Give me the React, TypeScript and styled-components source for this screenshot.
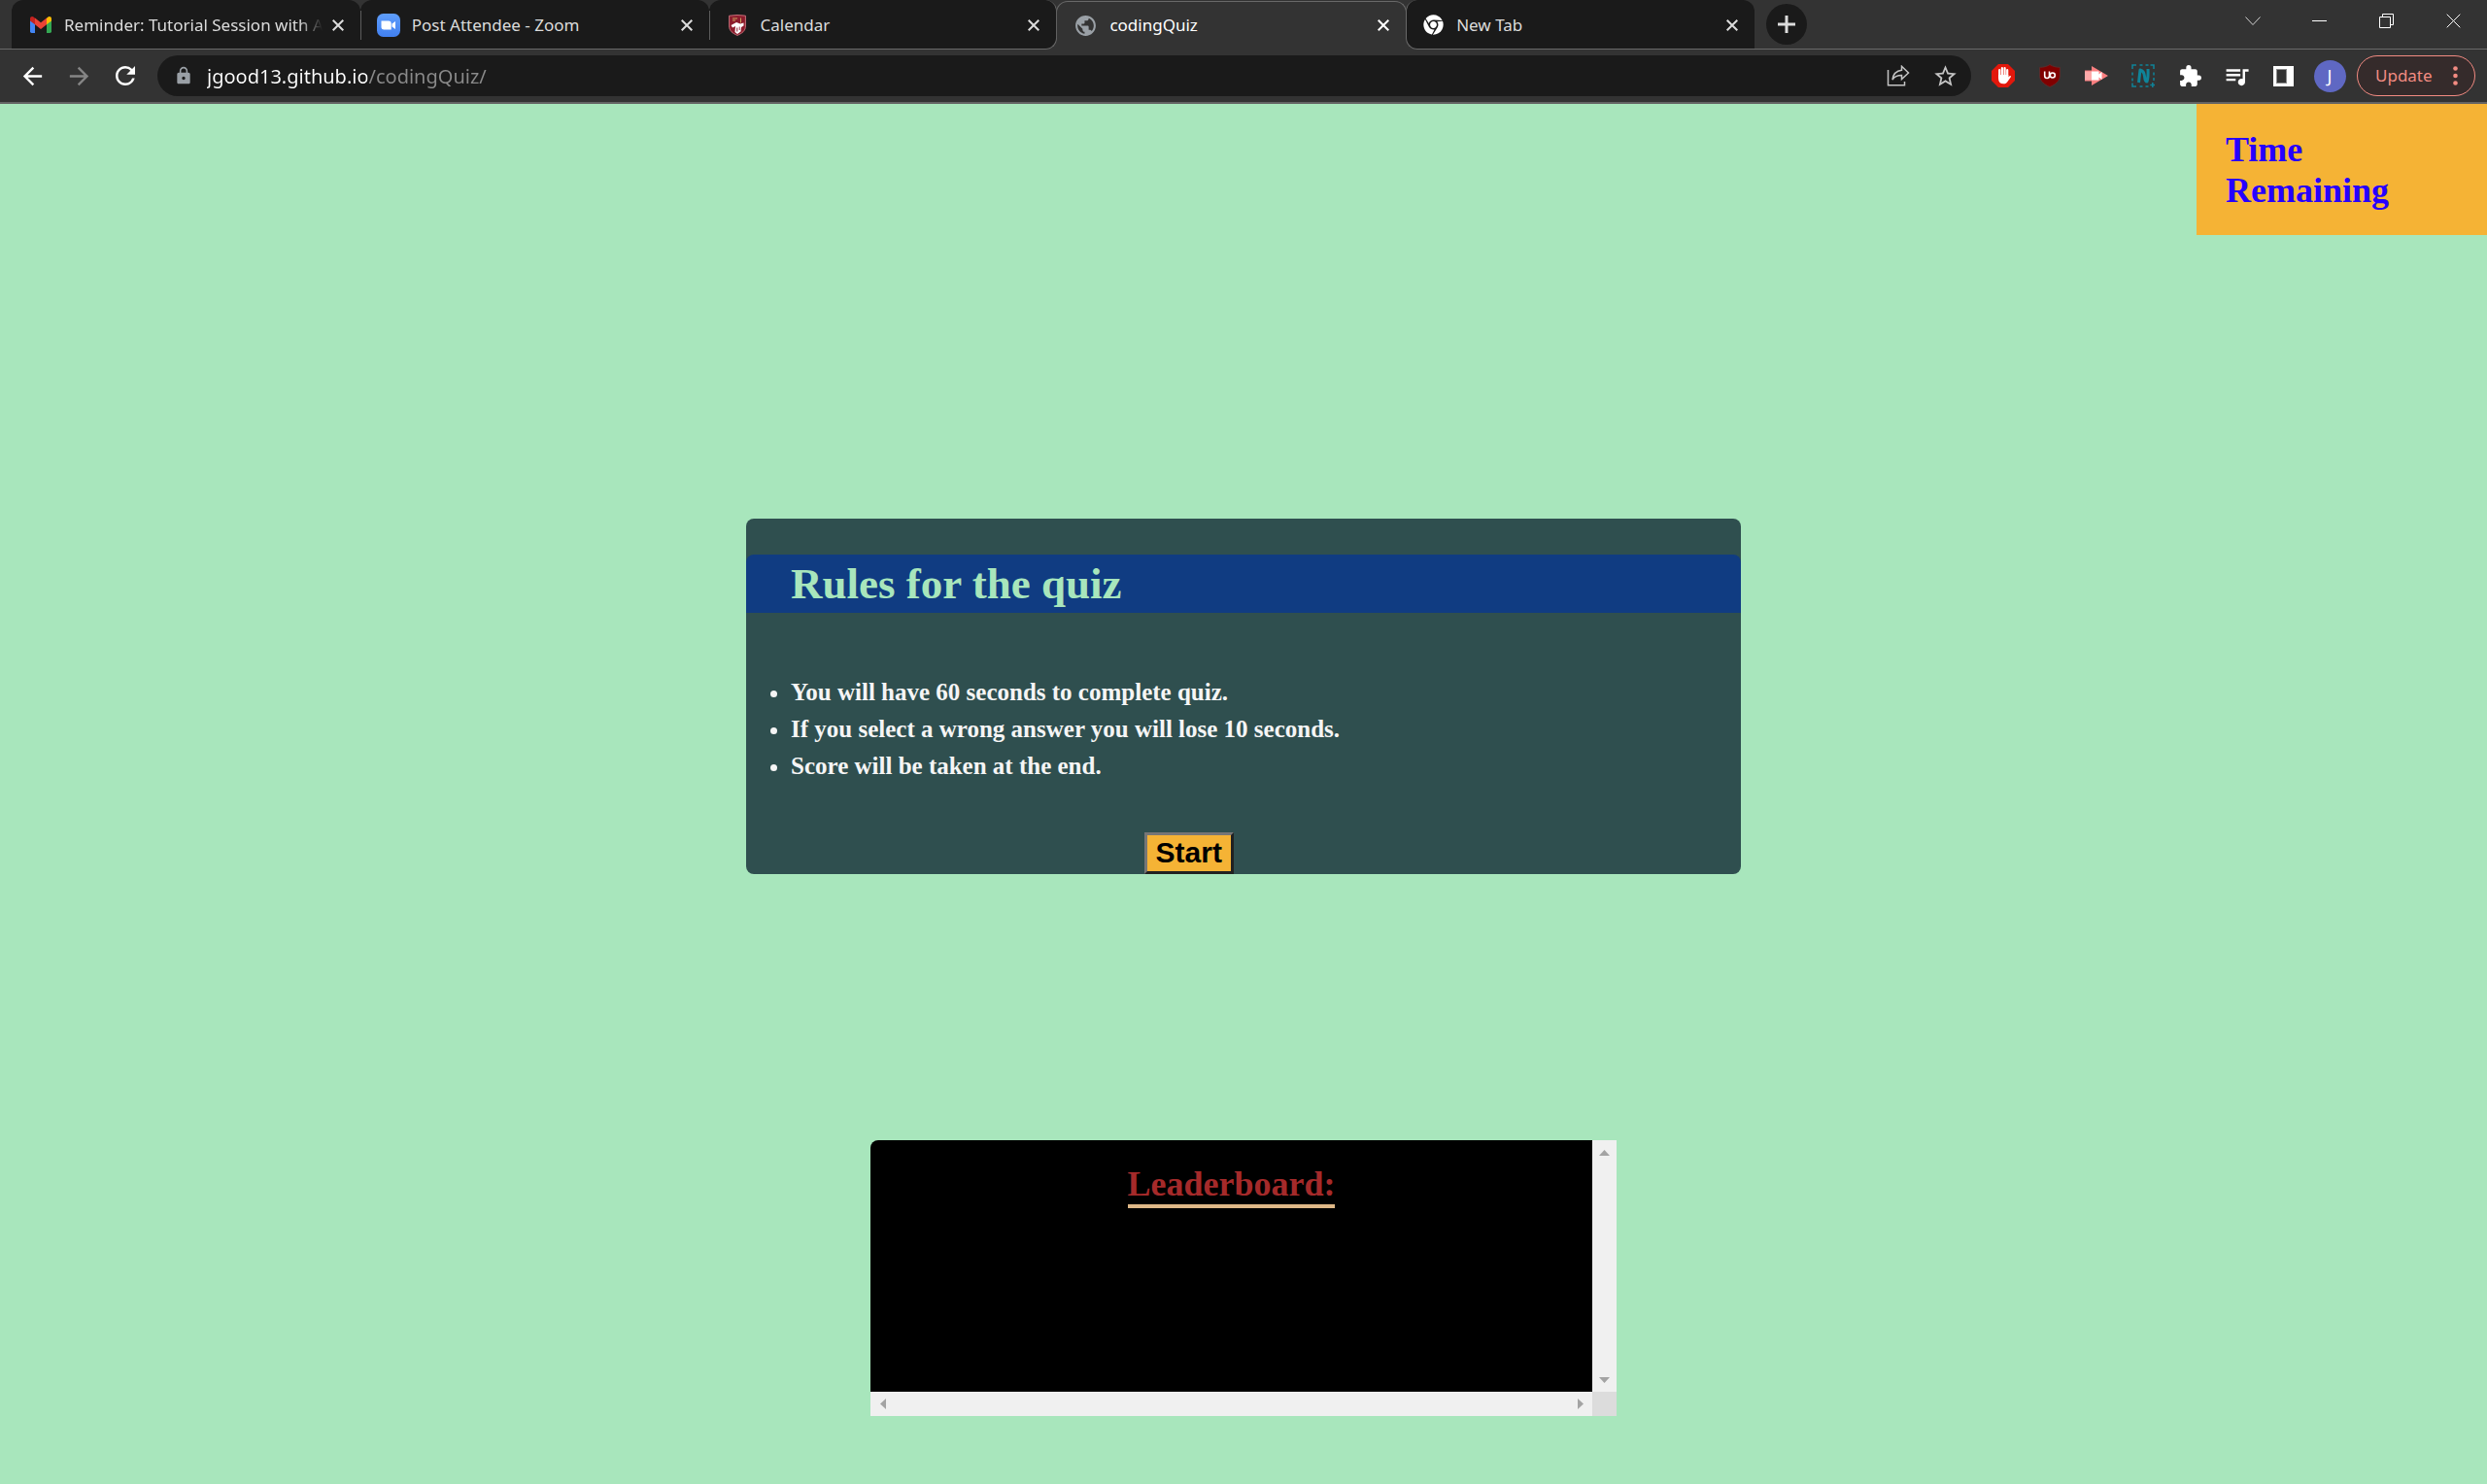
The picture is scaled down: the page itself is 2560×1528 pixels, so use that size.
import React from "react";
import styled, { createGlobalStyle, css } from "styled-components";
import {
  MdArrowBack,
  MdArrowForward,
  MdExtension,
  MdLock,
  MdPublic,
  MdQueueMusic,
  MdRefresh,
  MdStarBorder,
} from "react-icons/md";
import { FaChrome } from "react-icons/fa";

const ui = `"Segoe UI", "Noto Sans", "Open Sans", sans-serif`;
const serif = `"Times New Roman", "Liberation Serif", serif`;
const line = "#696969";
const frame = "#333333";
const dark = "#1a1a1a";

const GlobalStyle = createGlobalStyle`
  *, *::before, *::after { box-sizing: border-box; }
  html, body, #root { min-height: 100vh; }
  body { margin: 0; background: #a8e6bc; font-family: ${serif}; }
  button { font: inherit; color: inherit; background: none; border: 0; padding: 0; }
`;

/* ---------- browser window ---------- */

const TabStrip = styled.header`
  display: flex;
  height: 51px;
  background: ${frame};
  font-family: ${ui};
`;

const StripStart = styled.div`
  flex: 0 0 12px;
  border-bottom: 1px solid ${line};
`;

const Tabs = styled.nav`
  display: grid;
  grid-template-columns: repeat(5, minmax(0, 1fr));
  flex: 0 1 1794px;
  min-width: 0;
`;

type TabKind = "plain" | "beforeActive" | "active" | "afterActive";

const tabShapes = {
  plain: css`
    border-radius: 12px 12px 0 0;
  `,
  beforeActive: css`
    border-right: 1px solid ${line};
    border-radius: 12px 12px 12px 0;
  `,
  active: css`
    margin: 1px -1px 0;
    padding: 0 0 1px 17px;
    background: ${frame};
    border: 1px solid ${line};
    border-bottom: 0;
    border-radius: 12px 12px 0 0;
    color: #ffffff;
    clip-path: inset(0 0 12px 0);
  `,
  afterActive: css`
    padding-left: 15px;
    border-left: 1px solid ${line};
    border-radius: 12px 12px 0 12px;
  `,
};

const TabBox = styled.div<{ $kind: TabKind; $divided?: boolean }>`
  display: flex;
  align-items: center;
  gap: 12px;
  min-width: 0;
  padding: 1px 0 0 18px;
  background: ${dark};
  border-bottom: 1px solid ${line};
  color: #dcdcdc;
  ${(p) => tabShapes[p.$kind]}
  ${(p) =>
    p.$divided &&
    css`
      &::before {
        content: "";
        width: 1px;
        height: 30px;
        margin: 0 -12px 0 -18px;
        background: #5c5c5c;
      }
      & > :first-child {
        margin-left: 16px;
      }
    `}
`;

const Favicon = styled.span`
  display: flex;
  flex: 0 0 24px;
  justify-content: center;
`;

const TabTitle = styled.button<{ $fade?: boolean }>`
  flex: 1 1 0;
  min-width: 0;
  height: 26px;
  overflow: hidden;
  text-align: left;
  white-space: nowrap;
  font-size: 17px;
  line-height: 26px;
  ${(p) =>
    p.$fade &&
    css`
      mask-image: linear-gradient(90deg, #000 calc(100% - 24px), transparent);
    `}
`;

const CloseTab = styled.button`
  display: flex;
  flex: 0 0 24px;
  justify-content: center;
  margin: 0 11px 0 -8px;
`;

const StripRest = styled.div`
  display: flex;
  flex: 1 0 auto;
  align-items: center;
  padding-left: 12px;
  border-bottom: 1px solid ${line};
`;

const NewTab = styled.button`
  display: flex;
  align-items: center;
  justify-content: center;
  width: 42px;
  height: 42px;
  border-radius: 50%;
  background: ${dark};
  color: #dcdcdc;
`;

const WindowControls = styled.div`
  display: flex;
  align-self: flex-start;
  margin-left: auto;
`;

const WindowButton = styled.button`
  display: flex;
  align-items: center;
  justify-content: center;
  width: 69px;
  height: 43px;
  color: #ffffff;
`;

const Toolbar = styled.div`
  display: flex;
  align-items: center;
  height: 56px;
  padding: 0 12px 0 9px;
  background: ${frame};
  border-bottom: 2px solid #646464;
  font-family: ${ui};
`;

const IconButton = styled.button<{ $tone?: string }>`
  display: flex;
  flex: 0 0 48px;
  align-items: center;
  justify-content: center;
  height: 42px;
  color: ${(p) => p.$tone ?? "#ffffff"};
`;

const AddressBar = styled.div`
  display: flex;
  flex: 1 1 0;
  align-items: center;
  gap: 14px;
  height: 42px;
  margin: 0 9px;
  padding: 0 3px 0 17px;
  border-radius: 21px;
  background: ${dark};
`;

const AddressInput = styled.input`
  flex: 1 1 0;
  min-width: 0;
  height: 32px;
  padding: 0;
  border: 0;
  outline: 0;
  font-family: ${ui};
  font-size: 20px;
  color: #ffffff;
  background: linear-gradient(90deg, #ffffff 165px, #8a8a8a 165px);
  background-clip: text;
  -webkit-background-clip: text;
  -webkit-text-fill-color: transparent;
`;

const AddressActions = styled.div`
  display: flex;
`;

const Avatar = styled.span`
  display: flex;
  align-items: center;
  justify-content: center;
  width: 33px;
  height: 33px;
  border-radius: 50%;
  background: #5f68c3;
  font-size: 18px;
  line-height: 33px;
`;

const UpdateButton = styled.button`
  display: flex;
  flex: 0 0 122px;
  align-items: center;
  justify-content: space-between;
  height: 42px;
  margin-left: 4px;
  padding: 0 17px 1px 18px;
  border: 1px solid #f28b82;
  border-radius: 21px;
  background: #352b2b;
  color: #f28b82;
  font-size: 17px;
`;

/* ---------- quiz page ---------- */

const Page = styled.main`
  display: flex;
  flex-direction: column;
  align-items: center;
`;

const Timer = styled.aside`
  align-self: flex-end;
  width: 299px;
  padding: 26px 30px 25px;
  background: #f5b335;
`;

const TimerHeading = styled.h2`
  width: min-content;
  margin: 0;
  color: #2600ff;
  font-size: 36px;
  line-height: 42px;
`;

const RulesCard = styled.section`
  width: 40%;
  margin-top: 292px;
  padding-top: 37px;
  border-radius: 8px;
  background: #2f4f4f;
`;

const RulesHeading = styled.h1`
  margin: 0;
  padding-left: 46px;
  border-radius: 8px 8px 0 0;
  background: #103c82;
  color: #a8e6bc;
  font-size: 45px;
  line-height: 60px;
`;

const RuleList = styled.ul`
  margin: 63px 0 49px;
  padding-left: 46px;
  color: #f5f5f5;
  font-size: 25px;
  font-weight: bold;
  line-height: 38px;
`;

const StartButton = styled.button`
  display: block;
  margin-left: 40%;
  padding: 1px 9px 2px;
  border: 3px solid;
  border-color: #767676 #212121 #212121 #767676;
  background: #f5b335;
  color: #000000;
  font: bold 30px/34px Arial, "Liberation Sans", sans-serif;
`;

const Leaderboard = styled.section`
  display: grid;
  grid-template: 259px 25px / 1fr 25px;
  width: 30%;
  margin-top: 274px;
`;

const LeaderboardBody = styled.div`
  padding-top: 25px;
  border-radius: 8px 0 0 0;
  background: #000000;
  text-align: center;
`;

const LeaderboardHeading = styled.h2`
  display: inline-block;
  margin: 0;
  border-bottom: 4px solid #deb887;
  color: #a52a2a;
  font-size: 36px;
  line-height: 41px;
`;

const ScrollTrack = styled.div<{ $vertical?: boolean }>`
  display: flex;
  flex-direction: ${(p) => (p.$vertical ? "column" : "row")};
  justify-content: space-between;
  background: #f0f0f0;
`;

const ScrollArrow = styled.button`
  display: flex;
  align-items: center;
  justify-content: center;
  width: 25px;
  height: 25px;
`;

const ScrollCorner = styled.div`
  background: #dcdcdc;
`;

/* ---------- drawings ---------- */

const Cross = ({ size = 12, width = 2 }: { size?: number; width?: number }) => (
  <svg width={size} height={size} viewBox={`0 0 ${size} ${size}`} aria-hidden="true">
    <path d={`M.7.7 ${size - 0.7} ${size - 0.7}M${size - 0.7}.7.7 ${size - 0.7}`} stroke="currentColor" strokeWidth={width} />
  </svg>
);

const GmailIcon = () => (
  <svg width="22" height="17" viewBox="0 0 22 17" aria-hidden="true">
    <path d="M0 3v12.3Q0 17 1.600 17H5V6z" fill="#4285f4" />
    <path d="M22 3v12.300Q22 17 20.400 17H17V6z" fill="#34a853" />
    <path d="M5 1.800v6.500L0 4.500V2.300C0 .2 2.300-.7 3.900.8z" fill="#c5221f" />
    <path d="M17 1.800v6.500l5-3.800V2.300C22 .2 19.700-.7 18.100.8z" fill="#fbbc04" />
    <path d="M5 8.300V1.600l6 4.600 6-4.600v6.700l-6 4.600z" fill="#ea4335" />
  </svg>
);

const ZoomIcon = () => (
  <svg width="24" height="24" viewBox="0 0 24 24" aria-hidden="true">
    <defs>
      <linearGradient id="zoomBlue" x2="0" y2="1">
        <stop stopColor="#5e9dfb" />
        <stop offset="1" stopColor="#4180f0" />
      </linearGradient>
    </defs>
    <rect width="24" height="24" rx="6.500" fill="url(#zoomBlue)" />
    <path d="M4.500 7.500H12q2.700 0 2.700 2.700v6.300H7.200q-2.700 0-2.700-2.700zM15.500 10.600 19 8v8l-3.500-2.600z" fill="#fff" />
  </svg>
);

const CrestIcon = () => (
  <svg width="18" height="22" viewBox="0 0 18 22" aria-hidden="true">
    <path d="M.6 1.200Q9-.2 17.400 1.200V12c0 4.800-3.700 7.400-8.400 9.400C4.300 19.400.6 16.800.6 12z" fill="#8c1c2c" stroke="#c4707a" />
    <path d="M2.500 11 8 8l4 1.500 3.500-1v3L13 13l-.5 4.500L9 20l-2.500-2 .5-6-3 1.500z" fill="#fff" />
    <path d="M8.300 13.500h1v4h-1zM10.800 12.500h.8v3.500h-.8z" fill="#8c1c2c" />
    <path d="M12.500 3.500v5M4 4h5M4 6h3" stroke="#c9a25f" />
  </svg>
);

const PlusIcon = () => (
  <svg width="18" height="18" viewBox="0 0 18 18" aria-hidden="true">
    <path d="M9 0v18M0 9h18" stroke="currentColor" strokeWidth="3" />
  </svg>
);

const ChevronIcon = () => (
  <svg width="16" height="10" viewBox="0 0 16 10" aria-hidden="true">
    <path d="m.5.5 7.500 8 7.500-8" fill="none" stroke="#d0d0d0" />
  </svg>
);

const MinimizeIcon = () => (
  <svg width="15" height="1" viewBox="0 0 15 1" aria-hidden="true">
    <path d="M0 .5h15" stroke="currentColor" />
  </svg>
);

const RestoreIcon = () => (
  <svg width="15" height="15" viewBox="0 0 15 15" aria-hidden="true">
    <path d="M.5 3.500h11v11H.5zM3.500 3.500v-3h11v11h-3" fill="none" stroke="currentColor" />
  </svg>
);

const ShareIcon = () => (
  <svg width="24" height="22" viewBox="0 0 24 22" aria-hidden="true">
    <path d="M1.500 5v15.700h17V17" fill="none" stroke="currentColor" strokeWidth="1.500" />
    <path d="M15.500 1.300 22.500 8l-7 6.500v-4c-4.500 0-7.500 1.300-9.500 4.500.7-5.500 3.700-9 9.500-9.700z" fill="none" stroke="currentColor" strokeWidth="1.500" />
  </svg>
);

const AdBlockIcon = () => (
  <svg width="24" height="24" viewBox="0 0 24 24" aria-hidden="true">
    <path d="M7 0h10l7 7v10l-7 7H7l-7-7V7z" fill="#e2180c" />
    <g stroke="#fff" strokeWidth="2.200" strokeLinecap="round">
      <path d="M8.200 6v8M10.900 4.200V13M13.600 4.200V13M16.200 6.200V14" />
    </g>
    <path d="M7.100 11h10.200v2.500l1.300-1.200c1.200-.7 1.700.3 1.100 1.200L16.500 18c-1 1.500-2 2.300-4.200 2.300-3.400 0-5.200-2-5.200-5z" fill="#fff" />
  </svg>
);

const ShieldIcon = () => (
  <svg width="22" height="24" viewBox="0 0 22 24" aria-hidden="true">
    <path d="M11 .5C8 2.500 4.500 3.300.6 3.300V12c0 5.500 4.800 9 10.400 11.500C16.600 21 21.400 17.500 21.400 12V3.300C17.500 3.300 14 2.500 11 .5z" fill="#800000" stroke="#5e3030" strokeWidth=".8" />
    <path d="M5.700 7.500v4.600a2.400 2.400 0 0 0 4.800 0V7.500" fill="none" stroke="#fff" strokeWidth="1.600" />
    <circle cx="13.800" cy="11.500" r="2.500" fill="none" stroke="#fff" strokeWidth="1.600" />
  </svg>
);

const RecorderIcon = () => (
  <svg width="24" height="20" viewBox="0 0 24 20" aria-hidden="true">
    <path d="M0 4.500h7V0l17 10L7 20v-4.500H0z" fill="#fb7f80" />
    <path d="M7 5.500h7.500v3l3-2.500v8l-3-2.500v3H7z" fill="#fff" />
    <path d="M0 5.500h7v9H0z" fill="#fda9a9" />
  </svg>
);

const CaptureIcon = () => (
  <svg width="24" height="24" viewBox="0 0 24 24" aria-hidden="true" fill="none" stroke="#0f8499">
    <path d="M1 5V1h4M8.500 1h3M14.500 1h3M19.500 1H23v4M23 8.500v3M23 14v3M1 8.500v3M1 14.500v3M1 19.500V23h4M8.500 23h3M14.500 23h3" strokeWidth="1.500" />
    <path d="M7.500 19 9 6q4 1 4.500 6.500T16 18q1.500-5 1-13" strokeWidth="3" strokeLinejoin="round" />
    <path d="M21.800 19v5M19.300 21.500h5" strokeWidth="1.500" />
  </svg>
);

const SidePanelIcon = () => (
  <svg width="21" height="21" viewBox="0 0 21 21" aria-hidden="true">
    <path d="M0 0h21v21H0z" fill="#fff" />
    <path d="M3 3h11v15H3z" fill="#8a8a8a" />
    <path d="M4 4h9v13H4z" fill={frame} />
  </svg>
);

const DotsIcon = () => (
  <svg width="5" height="20" viewBox="0 0 5 20" aria-hidden="true" fill="currentColor">
    <circle cx="2.500" cy="2.500" r="2.300" />
    <circle cx="2.500" cy="10" r="2.300" />
    <circle cx="2.500" cy="17.500" r="2.300" />
  </svg>
);

const arrowShapes = {
  up: { w: 11, h: 6, d: "M0 6 5.500 0 11 6z" },
  down: { w: 11, h: 6, d: "M0 0h11L5.500 6z" },
  left: { w: 6, h: 11, d: "M6 0v11L0 5.500z" },
  right: { w: 6, h: 11, d: "M0 0v11l6-5.500z" },
};

const ScrollStep = ({ to }: { to: keyof typeof arrowShapes }) => {
  const { w, h, d } = arrowShapes[to];
  return (
    <ScrollArrow aria-label={`Scroll ${to}`}>
      <svg width={w} height={h} viewBox={`0 0 ${w} ${h}`} aria-hidden="true">
        <path d={d} fill="#a3a3a3" />
      </svg>
    </ScrollArrow>
  );
};

/* ---------- content ---------- */

const tabs: { title: string; icon: React.ReactNode; kind: TabKind; divided?: boolean; fade?: boolean }[] = [
  { title: "Reminder: Tutorial Session with A", icon: <GmailIcon />, kind: "plain", fade: true },
  { title: "Post Attendee - Zoom", icon: <ZoomIcon />, kind: "plain", divided: true },
  { title: "Calendar", icon: <CrestIcon />, kind: "beforeActive", divided: true },
  { title: "codingQuiz", icon: <MdPublic size={25} color="#9aa0a6" />, kind: "active" },
  { title: "New Tab", icon: <FaChrome size={21} color="#ffffff" />, kind: "afterActive" },
];

const rules = [
  "You will have 60 seconds to complete quiz.",
  "If you select a wrong answer you will lose 10 seconds.",
  "Score will be taken at the end.",
];

const extensions: { name: string; icon: React.ReactNode }[] = [
  { name: "Ad blocker", icon: <AdBlockIcon /> },
  { name: "Content shield", icon: <ShieldIcon /> },
  { name: "Screen recorder", icon: <RecorderIcon /> },
  { name: "Page capture", icon: <CaptureIcon /> },
  { name: "Extensions", icon: <MdExtension size={25} /> },
  { name: "Media controls", icon: <MdQueueMusic size={29} /> },
  { name: "Side panel", icon: <SidePanelIcon /> },
  { name: "Profile", icon: <Avatar>J</Avatar> },
];

export default function App() {
  return (
    <>
      <GlobalStyle />
      <TabStrip>
        <StripStart />
        <Tabs aria-label="Open tabs">
          {tabs.map((tab) => (
            <TabBox key={tab.title} $kind={tab.kind} $divided={tab.divided}>
              <Favicon>{tab.icon}</Favicon>
              <TabTitle $fade={tab.fade}>{tab.title}</TabTitle>
              <CloseTab aria-label={`Close ${tab.title}`}>
                <Cross />
              </CloseTab>
            </TabBox>
          ))}
        </Tabs>
        <StripRest>
          <NewTab aria-label="Open a new tab">
            <PlusIcon />
          </NewTab>
          <WindowControls>
            <WindowButton aria-label="Search tabs"><ChevronIcon /></WindowButton>
            <WindowButton aria-label="Minimize"><MinimizeIcon /></WindowButton>
            <WindowButton aria-label="Restore"><RestoreIcon /></WindowButton>
            <WindowButton aria-label="Close window"><Cross size={15} width={1} /></WindowButton>
          </WindowControls>
        </StripRest>
      </TabStrip>

      <Toolbar>
        <IconButton aria-label="Back"><MdArrowBack size={29} /></IconButton>
        <IconButton aria-label="Forward" $tone="#858585"><MdArrowForward size={29} /></IconButton>
        <IconButton aria-label="Reload"><MdRefresh size={30} /></IconButton>
        <AddressBar>
          <MdLock size={20} color="#9aa0a6" />
          <AddressInput aria-label="Address" defaultValue="jgood13.github.io/codingQuiz/" spellCheck={false} />
          <AddressActions>
            <IconButton aria-label="Share" $tone="#c4c4c4"><ShareIcon /></IconButton>
            <IconButton aria-label="Bookmark" $tone="#c4c4c4"><MdStarBorder size={27} /></IconButton>
          </AddressActions>
        </AddressBar>
        {extensions.map((item) => (
          <IconButton key={item.name} aria-label={item.name}>{item.icon}</IconButton>
        ))}
        <UpdateButton>
          Update
          <DotsIcon />
        </UpdateButton>
      </Toolbar>

      <Page>
        <Timer>
          <TimerHeading>Time Remaining</TimerHeading>
        </Timer>
        <RulesCard>
          <RulesHeading>Rules for the quiz</RulesHeading>
          <RuleList>
            {rules.map((rule) => (
              <li key={rule}>{rule}</li>
            ))}
          </RuleList>
          <StartButton>Start</StartButton>
        </RulesCard>
        <Leaderboard>
          <LeaderboardBody>
            <LeaderboardHeading>Leaderboard:</LeaderboardHeading>
          </LeaderboardBody>
          <ScrollTrack $vertical>
            <ScrollStep to="up" />
            <ScrollStep to="down" />
          </ScrollTrack>
          <ScrollTrack>
            <ScrollStep to="left" />
            <ScrollStep to="right" />
          </ScrollTrack>
          <ScrollCorner />
        </Leaderboard>
      </Page>
    </>
  );
}
